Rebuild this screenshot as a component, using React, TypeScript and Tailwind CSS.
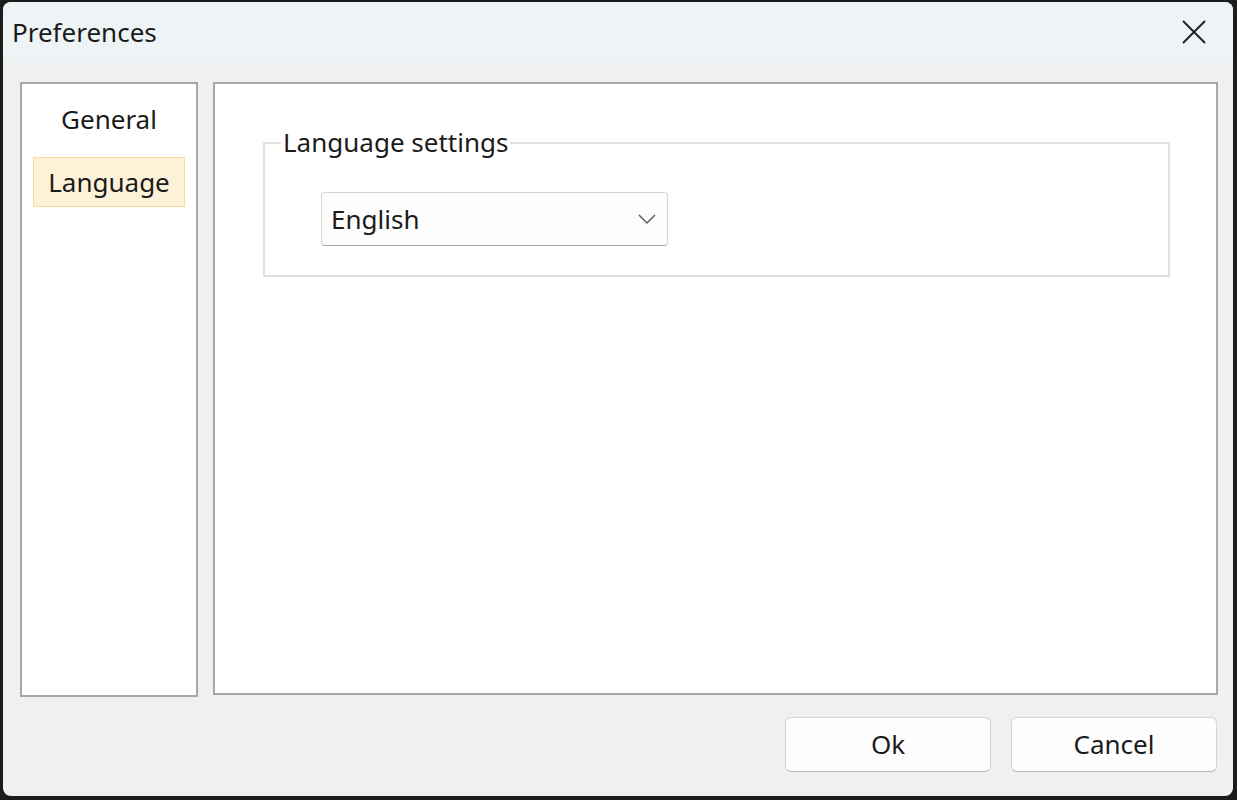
export default function App() {
  return (
    <div className="w-[1237px] h-[800px] bg-[#1c1c1c] overflow-hidden pt-[2px] pl-[3px]" style={{ fontFamily: '"Noto Sans", "Open Sans", sans-serif' }}>
      <div className="w-[1230px] h-[794px] rounded-[8px] bg-[#f0f0f0] overflow-hidden flex flex-col text-[#1b1b1b]">
        {/* Title bar */}
        <div className="h-[60px] shrink-0 bg-[#eef3f6] flex items-center justify-between pl-[9px] pr-[26px]">
          <span className="text-[26px] leading-none">Preferences</span>
          <svg width="26" height="26" viewBox="0 0 26 26" className="text-[#222]">
            <path d="M2 2 L24 24 M24 2 L2 24" stroke="currentColor" strokeWidth="2" fill="none" />
          </svg>
        </div>

        {/* Body */}
        <div className="flex flex-col pt-[20px] pl-[17px] pr-[15px]">
          <div className="flex gap-[15px]">
            {/* Nav list */}
            <div className="w-[178px] h-[615px] bg-white border-2 border-[#a5a8ae] flex flex-col items-center pt-[16px] gap-[19px]">
              <div className="h-[38px] flex items-center text-[26px]">General</div>
              <div className="w-[152px] h-[50px] bg-[#fdf2d8] border border-[#f7d9a4] flex items-center justify-center text-[26px]">
                Language
              </div>
            </div>

            {/* Content */}
            <div className="flex-1 h-[613px] bg-white border-2 border-[#a8a8a8] pt-[58px] pl-[48px] pr-[46px]">
              <div className="relative border-2 border-[#e0e0e0] h-[135px] pt-[48px] pl-[56px]">
                <span className="absolute -top-[17px] left-[16px] bg-white px-[2px] text-[26px] leading-[30px]">Language settings</span>
                <div className="w-[347px] h-[54px] rounded-[4px] bg-[#fdfdfd] border border-[#d6d6d6] border-b-[#a9a9a9] flex items-center justify-between pl-[9px] pr-[10px]">
                  <span className="text-[26px]">English</span>
                  <svg width="20" height="12" viewBox="0 0 20 12">
                    <path d="M2 2 L10 10 L18 2" stroke="#5c5c5c" strokeWidth="1.5" fill="none" />
                  </svg>
                </div>
              </div>
            </div>
          </div>

          {/* Buttons */}
          <div className="flex justify-end gap-[20px] mt-[20px] pr-[1px]">
            <button className="w-[206px] h-[55px] rounded-[6px] bg-[#fdfdfd] border border-[#d4d4d4] border-b-[#b8b8b8] text-[26px]">Ok</button>
            <button className="w-[206px] h-[55px] rounded-[6px] bg-[#fdfdfd] border border-[#d4d4d4] border-b-[#b8b8b8] text-[26px]">Cancel</button>
          </div>
        </div>
      </div>
    </div>
  );
}
